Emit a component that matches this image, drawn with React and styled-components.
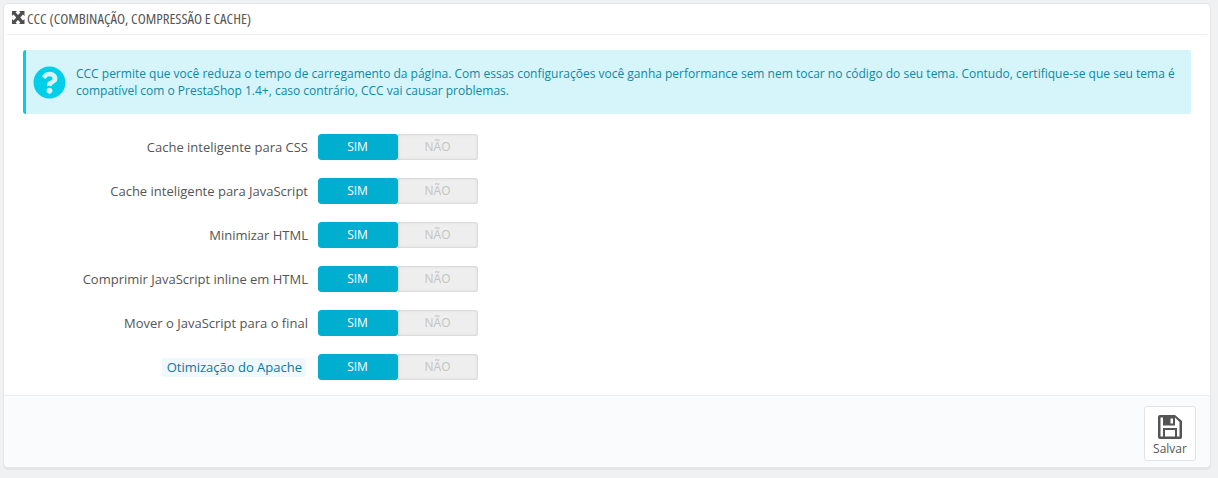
import React from "react";
import styled, { createGlobalStyle } from "styled-components";
import { FaQuestionCircle } from "react-icons/fa";

const Global = createGlobalStyle`
  html, body { margin: 0; padding: 0; background: #eff1f2; }
  body { font-family: "Open Sans", sans-serif; }
  * { box-sizing: border-box; }
`;
const Page = styled.div`
  width: 1218px; height: 478px; padding: 3px 7px 10px 3px;
`;
const Panel = styled.section`
  height: 465px; background: #fff; border: 1px solid #e6e6e6; border-radius: 5px;
  box-shadow: 0 2px 0 rgba(0,0,0,.05);
  display: flex; flex-direction: column; overflow: hidden;
`;
const Heading = styled.header`
  margin: 0 3px 0 3px; height: 31px; border-bottom: 1px solid #eee;
  display: flex; align-items: center; gap: 2px; padding: 0 0 3px 4px;
  font-family: "Open Sans", sans-serif; font-stretch: condensed; font-weight: 500;
  font-size: 14.8px; color: #555; text-transform: uppercase; white-space: nowrap;
`;
const Body = styled.div`
  flex: 1; padding: 15px 19px 0 19px;
`;
const Alert = styled.div`
  height: 64px; background: #d5f5fa; border-left: 3px solid #00cfe8; border-radius: 3px;
  display: flex; align-items: center; gap: 10px; padding: 0 8px 0 7px;
  color: #0e88a3; font-size: 12px; line-height: 17px;
  svg { font-size: 33px; color: #00cfea; flex: none; }
`;
const Form = styled.div`
  margin-top: 20px; display: flex; flex-direction: column; gap: 18px;
`;
const Row = styled.div`
  display: flex; align-items: center; gap: 10px;
`;
const LabelCell = styled.div`
  width: 285px; display: flex; justify-content: flex-end;
`;
const Label = styled.span`
  font-size: 13px; line-height: 19px; color: #555; white-space: nowrap;
  ${p => p.$hint && `
    background: #eef8fd; color: #0f77a0; padding: 0 4px 0 5px; border-radius: 3px; margin-right: 2px;
  `}
`;
const Toggle = styled.div`
  width: 160px; height: 26px; display: flex; border-radius: 3px; overflow: hidden;
`;
const Option = styled.div`
  width: 80px; display: flex; align-items: center; justify-content: center;
  font-size: 12px; padding: 0 1px 2px 0;
  background: ${p => (p.$on ? "#00aecf" : "#eee")};
  color: ${p => (p.$on ? "#fff" : "#c3c3c3")};
  box-shadow: ${p => (p.$on ? "none" : "inset 0 0 3px rgba(0,0,0,.22)")};
  border-radius: ${p => (p.$on ? "3px" : "0")};
`;
const Footer = styled.footer`
  height: 72px; background: #fafbfc; border-top: 1px solid #eee;
  display: flex; justify-content: flex-end; padding: 10px 14px 0 0;
`;
const SaveButton = styled.button`
  width: 52px; height: 55px; background: #fff; border: 1px solid #e3e3e3; border-radius: 3px;
  display: flex; flex-direction: column; align-items: center; padding: 8px 0 0;
  font-family: inherit; font-size: 12px; color: #555; line-height: 16px;
  svg { display: block; margin-bottom: 2px; }
`;

const SaveIcon = () => (
  <svg width="24" height="24" viewBox="0 0 24 24">
    <path fillRule="evenodd" fill="#555" d="M2 0h15l7 6v16a2 2 0 0 1-2 2H2a2 2 0 0 1-2-2V2a2 2 0 0 1 2-2ZM2.5 2.5H5v8h12v-8L21.5 7v14.5H19V13H5v8.500H2.500ZM7 15h10v6.500H7ZM12.500 3.500H15v5h-2.500Z" />
  </svg>
);

const ExpandIcon = () => (
  <svg width="14" height="13" viewBox="0 0 14 13">
    <path fill="#4d4d4d" d="M1 0h5L4.600 1.500 7 3.900 9.400 1.500 8 0h5.500v5L12 3.600 9.600 6 9.600 7 12 9.400 13.500 8v5H8l1.400-1.500L7 9.100 4.600 11.500 6 13H1V8l1.500 1.400L4.900 7V6L2.500 3.600 1 5Z" />
  </svg>
);

const rows = [
  "Cache inteligente para CSS",
  "Cache inteligente para JavaScript",
  "Minimizar HTML",
  "Comprimir JavaScript inline em HTML",
  "Mover o JavaScript para o final",
  "Otimização do Apache",
];

export default function App() {
  return (
    <Page>
      <Global />
      <Panel>
        <Heading><ExpandIcon /> CCC (Combinação, compressão e cache)</Heading>
        <Body>
          <Alert>
            <FaQuestionCircle />
            <div>CCC permite que você reduza o tempo de carregamento da página. Com essas configurações você ganha performance sem nem tocar no código do seu tema. Contudo, certifique-se que seu tema é compatível com o PrestaShop 1.4+, caso contrário, CCC vai causar problemas.</div>
          </Alert>
          <Form>
            {rows.map((r, i) => (
              <Row key={r}>
                <LabelCell><Label $hint={i === 5}>{r}</Label></LabelCell>
                <Toggle>
                  <Option $on>SIM</Option>
                  <Option>NÃO</Option>
                </Toggle>
              </Row>
            ))}
          </Form>
        </Body>
        <Footer>
          <SaveButton><SaveIcon />Salvar</SaveButton>
        </Footer>
      </Panel>
    </Page>
  );
}
